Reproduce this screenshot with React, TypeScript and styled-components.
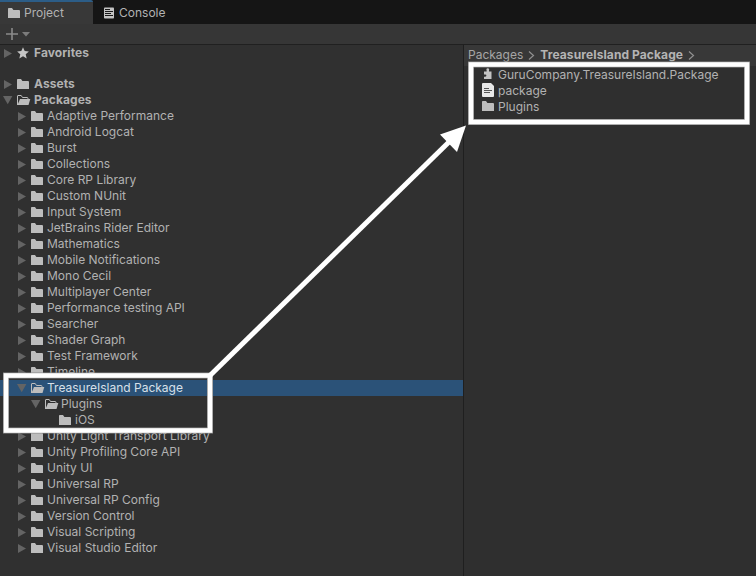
import React from "react";
import styled, { createGlobalStyle } from "styled-components";

const Global = createGlobalStyle`
  body { margin: 0; background: #303030; }
  * { box-sizing: border-box; }
`;

const Window = styled.div`
  position: relative;
  width: 756px;
  height: 576px;
  overflow: hidden;
  display: flex;
  flex-direction: column;
  background: #303030;
  color: #b2b2b2;
  font: 400 12px/16px Inter, "Liberation Sans", sans-serif;
  white-space: nowrap;
`;

const TabBar = styled.div`
  display: flex;
  height: 24px;
  background: #151515;
`;

const Tab = styled.div<{ $active?: boolean }>`
  display: flex;
  align-items: center;
  gap: ${(p) => (p.$active ? 2 : 4)}px;
  width: 93px;
  height: 24px;
  padding: 0 0 0 ${(p) => (p.$active ? 8 : 11)}px;
  background: ${(p) => (p.$active ? "#383838" : "transparent")};
  border-top: 2px solid ${(p) => (p.$active ? "#2c5d87" : "transparent")};
  border-radius: 0 2px 0 0;
`;

const Toolbar = styled.div`
  display: flex;
  align-items: center;
  gap: 4px;
  height: 21px;
  padding-left: 6px;
  background: #363636;
  border-bottom: 1px solid #202020;
`;

const Body = styled.div`
  display: flex;
  flex: 1;
`;

const Tree = styled.div`
  width: 464px;
  padding-top: 1px;
  margin-top: -1px;
  border-right: 1px solid #1f1f1f;
`;

const Row = styled.div<{ $depth: number; $bold?: boolean; $selected?: boolean; $gap?: boolean }>`
  display: flex;
  align-items: center;
  height: 16px;
  margin-bottom: ${(p) => (p.$gap ? 15 : 0)}px;
  padding-left: ${(p) => 3 + p.$depth * 14}px;
  font-weight: ${(p) => (p.$bold ? 700 : 400)};
  letter-spacing: ${(p) => (p.$bold ? 0.08 : 0)}px;
  color: ${(p) => (p.$selected ? "#d8e0e8" : "inherit")};
  background: ${(p) => (p.$selected ? "#2b5278" : "transparent")};
`;

const ArrowSlot = styled.span`
  display: flex;
  width: 14px;
  height: 16px;
`;

const IconSlot = styled.span<{ $wide?: boolean }>`
  display: flex;
  width: ${(p) => (p.$wide ? 17 : 16)}px;
  height: 16px;
`;

const Label = styled.span`
  height: 16px;
`;

const Contents = styled.div`
  flex: 1;
  background: #2f2f2f;
`;

const Breadcrumb = styled.div`
  display: flex;
  align-items: center;
  gap: 5px;
  height: 21px;
  padding: 0 0 2px 4px;
  background: #383838;
  color: #a6a6a6;
`;

const Current = styled.span`
  font-weight: 700;
  letter-spacing: 0.1px;
  color: #b4b4b4;
`;

const FileRow = styled.div`
  display: flex;
  align-items: center;
  gap: 2px;
  height: 16px;
  padding-left: 18px;
`;

const FileLabel = styled.span`
  line-height: 18px;
  padding-top: 1px;
`;

const Annotation = styled.svg`
  position: absolute;
  inset: 0;
  pointer-events: none;
`;

const Folder = () => (
  <svg width="14" height="16" viewBox="0 0 14 16">
    <path d="M0 3.8q0-.8.8-.8H4l1.4 2H11q1 0 1 1v7H0z" fill="#bdbdbd" />
  </svg>
);

const OpenFolder = () => (
  <svg width="14" height="16" viewBox="0 0 14 16">
    <path d="M.5 13V4q0-.5.5-.5h3.2l1.3 2H10q1 0 1 1V7" fill="none" stroke="#bdbdbd" />
    <path d="M3 7h10.3l-1.8 6H.5z" fill="#bdbdbd" />
  </svg>
);

const Star = () => (
  <svg width="13" height="16" viewBox="0 0 13 16">
    <path d="M6 2.2l1.7 3.9 4.2.4-3.2 2.8 1 4.3L6 11.3l-3.7 2.3 1-4.3L.1 6.5l4.2-.4z" fill="#c4c4c4" />
  </svg>
);

const Disclosure = ({ open }: { open?: boolean }) => (
  <svg width="10" height="16" viewBox="0 0 10 16">
    <path d={open ? "M0 4h9.4L4.7 12.3z" : "M1 4v9L9 8.5z"} fill="#646464" />
  </svg>
);

const ConsoleIcon = () => (
  <svg width="11" height="12" viewBox="0 0 11 12">
    <rect x="0" y="0.5" width="10" height="11" rx="0.8" fill="#c4c4c4" />
    <path d="M1 2.5h5M1 4.5h8M1 6.5h6M1 8.5h8" stroke="#191919" />
  </svg>
);

const Puzzle = () => (
  <svg width="14" height="16" viewBox="0 0 14 16">
    <path d="M2 5.5h2.6V4.2C4 2.9 4.8 2.2 5.8 2.2S7.6 2.900 7 4.200v1.300h2.500V13H2v-2.300h1.200q1.200 0 1.200-1.100T3.200 8.500H2z" fill="#c4c4c4" />
  </svg>
);

const Doc = () => (
  <svg width="14" height="16" viewBox="0 0 14 16">
    <path d="M0 2q0-1 1-1h8l3 3v10q0 1-1 1H1q-1 0-1-1z" fill="#e8e8e8" />
    <path d="M2 6.5h5M2 8.5h8M2 10.5h6" stroke="#555" />
  </svg>
);

const Chevron = () => (
  <svg width="7" height="12" viewBox="0 0 7 12">
    <path d="M1 2.5l4.5 4-4.5 4" fill="none" stroke="#909090" strokeWidth="1.2" />
  </svg>
);

type Item = {
  name: string;
  depth: number;
  state?: "open" | "leaf";
  bold?: boolean;
  star?: boolean;
  selected?: boolean;
};

const pkg = (name: string): Item => ({ name, depth: 1 });

const items: Item[] = [
  { name: "Favorites", depth: 0, bold: true, star: true },
  { name: "Assets", depth: 0, bold: true },
  { name: "Packages", depth: 0, bold: true, state: "open" },
  ...[
    "Adaptive Performance", "Android Logcat", "Burst", "Collections", "Core RP Library",
    "Custom NUnit", "Input System", "JetBrains Rider Editor", "Mathematics",
    "Mobile Notifications", "Mono Cecil", "Multiplayer Center", "Performance testing API",
    "Searcher", "Shader Graph", "Test Framework", "Timeline",
  ].map(pkg),
  { name: "TreasureIsland Package", depth: 1, state: "open", selected: true },
  { name: "Plugins", depth: 2, state: "open" },
  { name: "iOS", depth: 3, state: "leaf" },
  ...[
    "Unity Light Transport Library", "Unity Profiling Core API", "Unity UI", "Universal RP",
    "Universal RP Config", "Version Control", "Visual Scripting", "Visual Studio Editor",
  ].map(pkg),
];

export default function App() {
  return (
    <Window>
      <Global />
      <TabBar>
        <Tab $active><Folder /><Label>Project</Label></Tab>
        <Tab><ConsoleIcon /><Label>Console</Label></Tab>
      </TabBar>
      <Toolbar>
        <svg width="12" height="12" viewBox="0 0 12 12">
          <path d="M6 0v12M0 6h12" stroke="#8b8b8b" strokeWidth="1.6" />
        </svg>
        <svg width="8" height="5" viewBox="0 0 8 5"><path d="M0 0h8L4 4.5z" fill="#7c7c7c" /></svg>
      </Toolbar>
      <Body>
        <Tree>
          {items.map((item) => (
            <Row key={item.name} $depth={item.depth} $bold={item.bold} $selected={item.selected} $gap={item.star}>
              <ArrowSlot>{item.state !== "leaf" && <Disclosure open={item.state === "open"} />}</ArrowSlot>
              <IconSlot $wide={item.bold}>
                {item.star ? <Star /> : item.state === "open" ? <OpenFolder /> : <Folder />}
              </IconSlot>
              <Label>{item.name}</Label>
            </Row>
          ))}
        </Tree>
        <Contents>
          <Breadcrumb>
            <Label>Packages</Label><Chevron /><Current>TreasureIsland Package</Current><Chevron />
          </Breadcrumb>
          <FileRow><Puzzle /><FileLabel>GuruCompany.TreasureIsland.Package</FileLabel></FileRow>
          <FileRow><Doc /><FileLabel>package</FileLabel></FileRow>
          <FileRow><Folder /><FileLabel>Plugins</FileLabel></FileRow>
        </Contents>
      </Body>
      <Annotation width="756" height="576" viewBox="0 0 756 576">
        <g fill="none" stroke="#8c8c8c" strokeWidth="6">
          <rect x="471" y="64.5" width="276" height="57.5" />
          <rect x="6" y="375.5" width="204" height="55" />
        </g>
        <g fill="none" stroke="#fff" strokeWidth="4.6">
          <rect x="471" y="64.5" width="276" height="57.5" />
          <rect x="6" y="375.5" width="204" height="55" />
          <path d="M210 375.5L450 141" strokeWidth="5" />
        </g>
        <path d="M466 125.5L440 134.5L457 152z" fill="#fff" />
      </Annotation>
    </Window>
  );
}
